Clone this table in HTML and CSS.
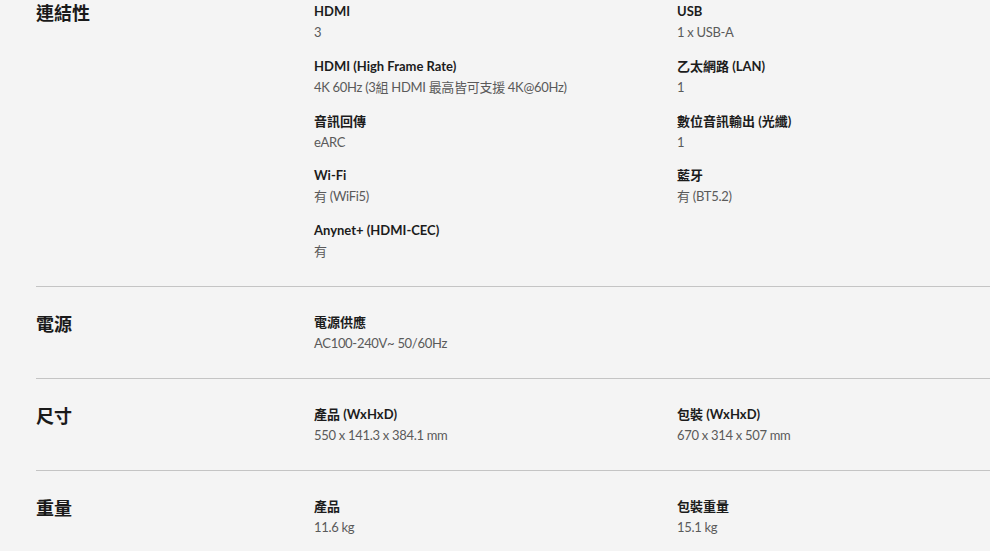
FILE: index.html
```html
<!DOCTYPE html>
<html lang="zh-Hant">
<head>
<meta charset="utf-8">
<title>規格</title>
<link rel="stylesheet" href="styles.css">
</head>
<body>
<div class="specs">
  <section class="spec-section spec-section--first">
    <h2 class="spec-title">連結性</h2>
    <ul class="spec-list">
      <li class="spec-item"><p class="spec-label">HDMI</p><p class="spec-value">3</p></li>
      <li class="spec-item"><p class="spec-label">USB</p><p class="spec-value">1 x USB-A</p></li>
      <li class="spec-item"><p class="spec-label">HDMI (High Frame Rate)</p><p class="spec-value">4K 60Hz (3組 HDMI 最高皆可支援 4K@60Hz)</p></li>
      <li class="spec-item"><p class="spec-label">乙太網路 (LAN)</p><p class="spec-value">1</p></li>
      <li class="spec-item"><p class="spec-label">音訊回傳</p><p class="spec-value">eARC</p></li>
      <li class="spec-item"><p class="spec-label">數位音訊輸出 (光纖)</p><p class="spec-value">1</p></li>
      <li class="spec-item"><p class="spec-label">Wi-Fi</p><p class="spec-value">有 (WiFi5)</p></li>
      <li class="spec-item"><p class="spec-label">藍牙</p><p class="spec-value">有 (BT5.2)</p></li>
      <li class="spec-item"><p class="spec-label">Anynet+ (HDMI-CEC)</p><p class="spec-value">有</p></li>
    </ul>
  </section>
  <section class="spec-section">
    <h2 class="spec-title">電源</h2>
    <ul class="spec-list">
      <li class="spec-item"><p class="spec-label">電源供應</p><p class="spec-value">AC100-240V~ 50/60Hz</p></li>
    </ul>
  </section>
  <section class="spec-section">
    <h2 class="spec-title">尺寸</h2>
    <ul class="spec-list">
      <li class="spec-item"><p class="spec-label">產品 (WxHxD)</p><p class="spec-value">550 x 141.3 x 384.1 mm</p></li>
      <li class="spec-item"><p class="spec-label">包裝 (WxHxD)</p><p class="spec-value">670 x 314 x 507 mm</p></li>
    </ul>
  </section>
  <section class="spec-section">
    <h2 class="spec-title">重量</h2>
    <ul class="spec-list">
      <li class="spec-item"><p class="spec-label">產品</p><p class="spec-value">11.6 kg</p></li>
      <li class="spec-item"><p class="spec-label">包裝重量</p><p class="spec-value">15.1 kg</p></li>
    </ul>
  </section>
</div>
</body>
</html>
```

FILE: styles.css
```css
* { box-sizing: border-box; }
html, body {
  margin: 0;
  padding: 0;
  background: #f4f4f4;
}
body {
  font-family: Lato, "Noto Sans CJK TC", sans-serif;
  color: #1c1c1c;
}
.specs {
  padding-left: 36px;
}
.spec-section {
  display: grid;
  grid-template-columns: 278px 363px 1fr;
  border-top: 1px solid #c4c4c4;
  padding: 25px 0 24px;
}
.spec-section--first {
  border-top: none;
  padding-top: 1px;
}
.spec-title {
  margin: 0;
  font-family: "Noto Sans CJK TC", sans-serif;
  font-size: 18px;
  line-height: 22px;
  font-weight: 700;
  color: #1a1a1a;
}
.spec-list {
  grid-column: 2 / 4;
  list-style: none;
  margin: 0;
  padding: 0;
  display: grid;
  grid-template-columns: 363px 1fr;
  row-gap: 12.75px;
}
.spec-item p {
  margin: 0;
  font-size: 13px;
  line-height: 21px;
}
.spec-label {
  font-weight: 700;
  color: #1c1c1c;
}
.spec-value {
  color: #5a5a5a;
  letter-spacing: -0.3px;
}
```
